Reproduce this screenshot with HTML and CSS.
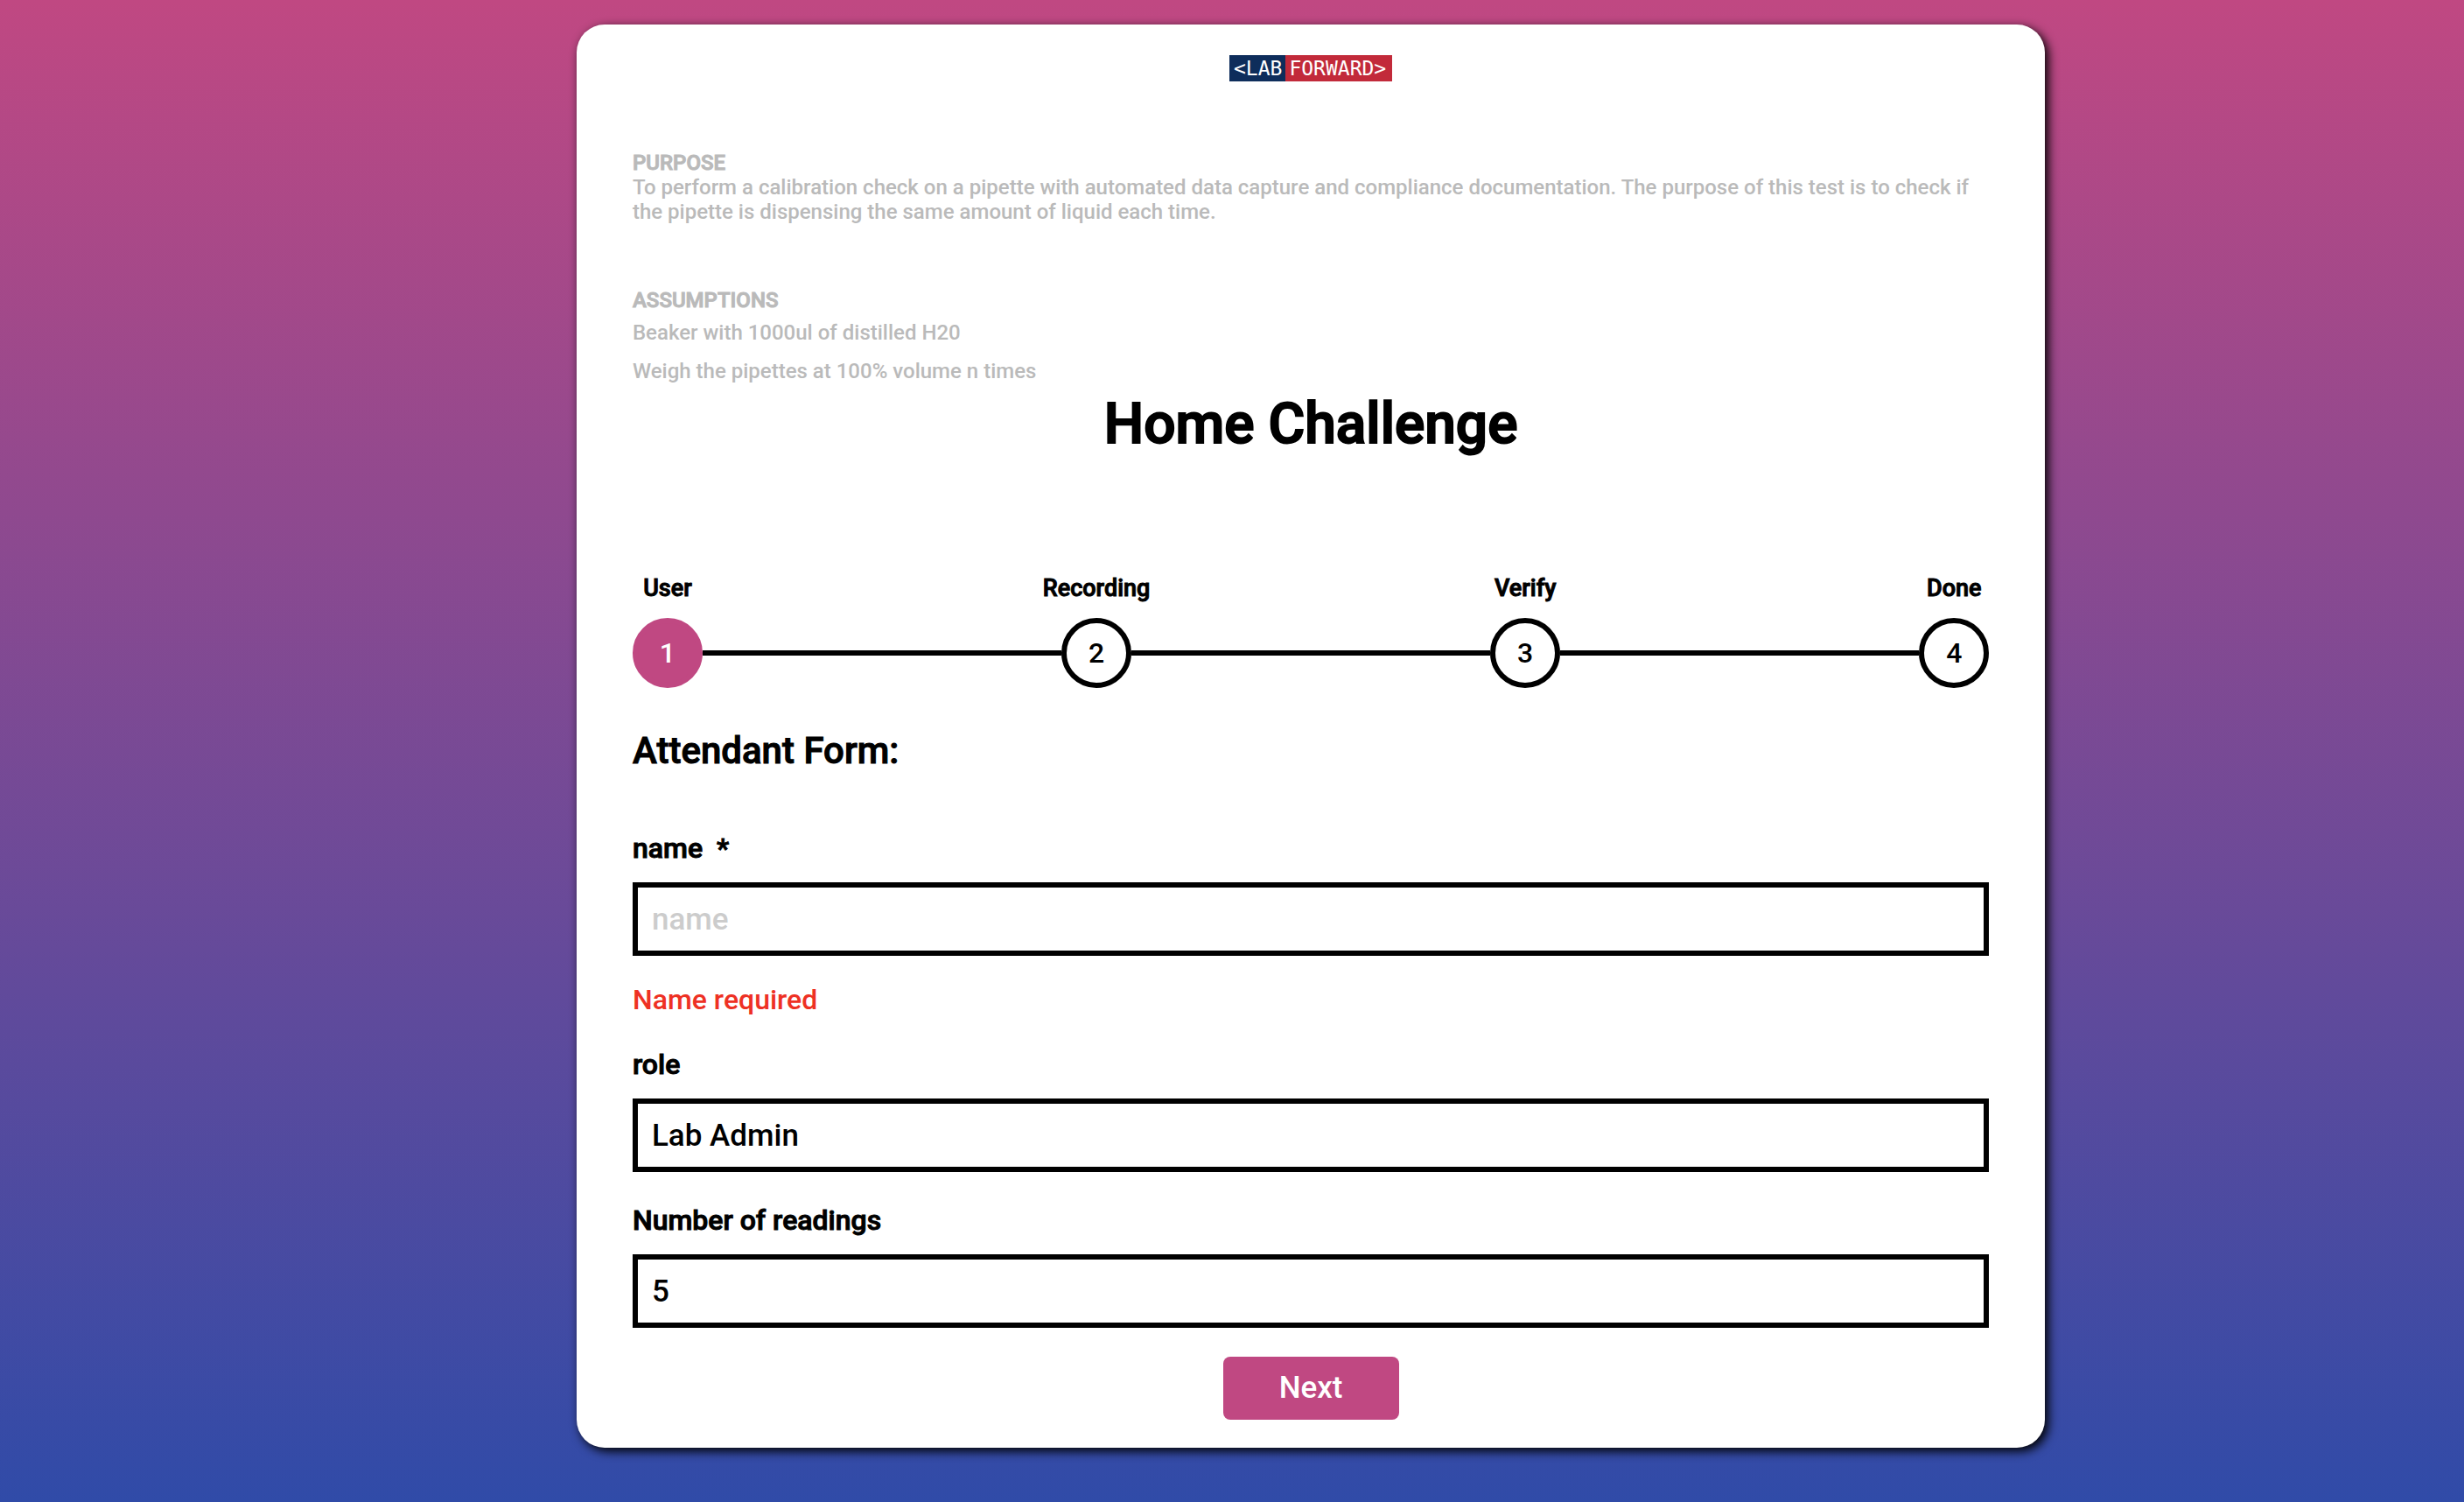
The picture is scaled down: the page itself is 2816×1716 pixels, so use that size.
FILE: index.html
```html
<!DOCTYPE html>
<html lang="en">
<head>
<meta charset="utf-8">
<meta name="viewport" content="width=device-width, initial-scale=1">
<title>Home Challenge</title>
<link rel="stylesheet" href="styles.css">
</head>
<body>
<main class="card">
  <div class="logo"><span class="logo-lab">&lt;LAB</span><span class="logo-forward">FORWARD&gt;</span></div>

  <section class="purpose">
    <h2 class="note-title">PURPOSE</h2>
    <p class="note">To perform a calibration check on a pipette with automated data capture and compliance documentation. The purpose of this test is to check if the pipette is dispensing the same amount of liquid each time.</p>
  </section>

  <section class="assumptions">
    <h2 class="note-title">ASSUMPTIONS</h2>
    <ul class="note-list">
      <li>Beaker with 1000ul of distilled H20</li>
      <li>Weigh the pipettes at 100% volume n times</li>
    </ul>
  </section>

  <h1 class="title">Home Challenge</h1>

  <ol class="steps">
    <li class="step step-active"><span class="step-label">User</span><span class="step-dot">1</span></li>
    <li class="step-line"></li>
    <li class="step"><span class="step-label">Recording</span><span class="step-dot">2</span></li>
    <li class="step-line"></li>
    <li class="step"><span class="step-label">Verify</span><span class="step-dot">3</span></li>
    <li class="step-line"></li>
    <li class="step"><span class="step-label">Done</span><span class="step-dot">4</span></li>
  </ol>

  <form class="form" novalidate>
    <h2 class="form-title">Attendant Form:</h2>
    <div class="fields">
      <div class="field">
        <label class="label" for="name">name &nbsp;*</label>
        <input class="control" id="name" type="text" placeholder="name" aria-describedby="name-error">
        <p class="error" id="name-error">Name required</p>
      </div>
      <div class="field">
        <label class="label" for="role">role</label>
        <select class="control" id="role"><option>Lab Admin</option></select>
      </div>
      <div class="field">
        <label class="label" for="readings">Number of readings</label>
        <input class="control" id="readings" type="number" value="5">
      </div>
    </div>
    <button class="next" type="button">Next</button>
  </form>
</main>
</body>
</html>
```

FILE: styles.css
```css
* {
  box-sizing: border-box;
  margin: 0;
  padding: 0;
}

body {
  min-height: 100vh;
  padding: 28px 17% 62px 23.4%;
  background: linear-gradient(#c04882, #304ba8);
  color: #000;
  font-family: Roboto, "Liberation Sans", sans-serif;
  font-size: 32px;
  font-weight: 500;
}

ul,
ol {
  list-style: none;
}

.card {
  display: flex;
  flex-direction: column;
  padding: 35px 64px 32px;
  border-radius: 32px;
  background: #fff;
  box-shadow: 4px 4px 12px #000;
}

.logo {
  display: flex;
  align-self: center;
  color: #fff;
  font: 23px/30px "DejaVu Sans Mono", monospace;
}

.logo-lab {
  padding: 0 4px 0 5px;
  background: #0e2d5b;
}

.logo-forward {
  padding: 0 7px 0 4px;
  background: #c22a3a;
}

.purpose {
  margin-top: 79px;
}

.assumptions {
  margin-top: 73px;
}

.purpose,
.assumptions {
  color: #bababa;
  font-size: 24px;
  line-height: 28px;
}

/* Headings thicken the medium weight and keep its spacing */
.note-title,
.title,
.step-label,
.form-title,
.label {
  font-weight: 500;
  -webkit-text-stroke: 1px currentColor;
}

.note-title {
  font-size: 24px;
}

.note-list {
  margin-top: 1px;
  line-height: 44px;
}

.title {
  font-size: 64px;
  line-height: 78px;
  text-align: center;
  -webkit-text-stroke-width: 2px;
}

.steps {
  display: flex;
  align-items: flex-end;
  margin-top: 132px;
}

.step {
  display: flex;
  flex-direction: column;
  align-items: center;
  gap: 18px;
  width: 80px;
}

.step-label {
  font-size: 27px;
  line-height: 32px;
}

.step-dot {
  width: 80px;
  border: 6px solid #000;
  border-radius: 50%;
  line-height: 68px;
  text-align: center;
}

.step-active .step-dot {
  border-color: #c04882;
  background: #c04882;
  color: #fff;
}

.step-line {
  flex: 1;
  height: 6px;
  margin-bottom: 37px;
  background: #000;
}

.form {
  display: flex;
  flex-direction: column;
  margin-top: 47px;
}

.form-title {
  margin-bottom: 67px;
  font-size: 42px;
  line-height: 50px;
}

.fields {
  display: flex;
  flex-direction: column;
  gap: 36px;
}

.label {
  display: block;
  margin-bottom: 20px;
  line-height: 38px;
}

.control {
  display: block;
  width: 100%;
  height: 84px;
  padding: 0 16px;
  border: 6px solid #000;
  border-radius: 0;
  outline: none;
  background: #fff;
  color: #000;
  font: inherit;
  font-size: 35px;
  appearance: none;
}

.control[type="number"] {
  appearance: textfield;
}

.control::placeholder {
  color: #ccc;
}

.error {
  margin-top: 31px;
  color: #ee3124;
  line-height: 38px;
}

.next {
  align-self: center;
  margin-top: 33px;
  padding: 15px 64px;
  border: 0;
  border-radius: 8px;
  background: #c04882;
  color: #fff;
  font: inherit;
  font-size: 35px;
  line-height: 42px;
}
```
